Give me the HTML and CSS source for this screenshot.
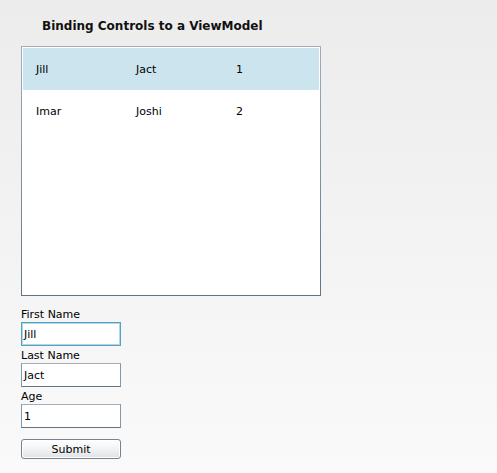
FILE: index.html
```html
<!DOCTYPE html>
<html>
<head>
<meta charset="utf-8">
<link rel="stylesheet" href="styles.css">
</head>
<body>
<div class="page">
  <h1 class="title">Binding Controls to a ViewModel</h1>
  <div class="listbox">
    <div class="row selected"><span class="cell">Jill</span><span class="cell">Jact</span><span class="cell">1</span></div>
    <div class="row"><span class="cell">Imar</span><span class="cell">Joshi</span><span class="cell">2</span></div>
  </div>
  <form class="form">
    <label class="label">First Name</label>
    <div class="textbox focused">Jill</div>
    <label class="label">Last Name</label>
    <div class="textbox">Jact</div>
    <label class="label">Age</label>
    <div class="textbox">1</div>
    <div class="button">Submit</div>
  </form>
</div>
</body>
</html>
```
FILE: styles.css
```css
html, body {
  margin: 0;
  padding: 0;
  height: 100%;
}
body {
  background: linear-gradient(#ececec, #fafafa);
  font-family: "DejaVu Sans", Verdana, sans-serif;
  font-size: 11px;
  color: #000;
}
.page {
  padding: 18px 0 0 21px;
  display: flex;
  flex-direction: column;
  align-items: flex-start;
}
.title {
  margin: 0 0 11px 21px;
  font-size: 12px;
  font-weight: bold;
  line-height: 17px;
  color: #111;
}
.listbox {
  box-sizing: border-box;
  width: 300px;
  height: 250px;
  border: 1px solid;
  border-image: linear-gradient(#a3aeb9, #617584) 1;
  background: #fff;
  padding: 1px;
}
.row {
  height: 42px;
  display: flex;
  align-items: center;
  padding-left: 13px;
}
.row.selected {
  background: #cce4ed;
}
.cell {
  width: 100px;
  flex: none;
}
.form {
  margin: 9px 0 0 0;
  display: flex;
  flex-direction: column;
  align-items: flex-start;
}
.label {
  box-sizing: border-box;
  padding-top: 1px;
  line-height: 17px;
  height: 17px;
}
.textbox {
  box-sizing: border-box;
  width: 100px;
  height: 24px;
  border: 1px solid;
  border-color: #a3aeb9 #8399a9 #617584 #8399a9;
  background: #fff;
  padding: 0 0 0 2px;
  display: flex;
  align-items: center;
}
.textbox.focused {
  border-color: #5b9ec0;
  box-shadow: inset 0 0 0 1px #a9dbe8;
}
.button {
  box-sizing: border-box;
  margin-top: 11px;
  width: 100px;
  height: 20px;
  padding-top: 1px;
  border: 1px solid #76828e;
  border-radius: 3px;
  background: linear-gradient(#ffffff, #f3f4f5 45%, #dfe3e6);
  box-shadow: inset 0 0 0 1px #fff;
  display: flex;
  align-items: center;
  justify-content: center;
}
```
